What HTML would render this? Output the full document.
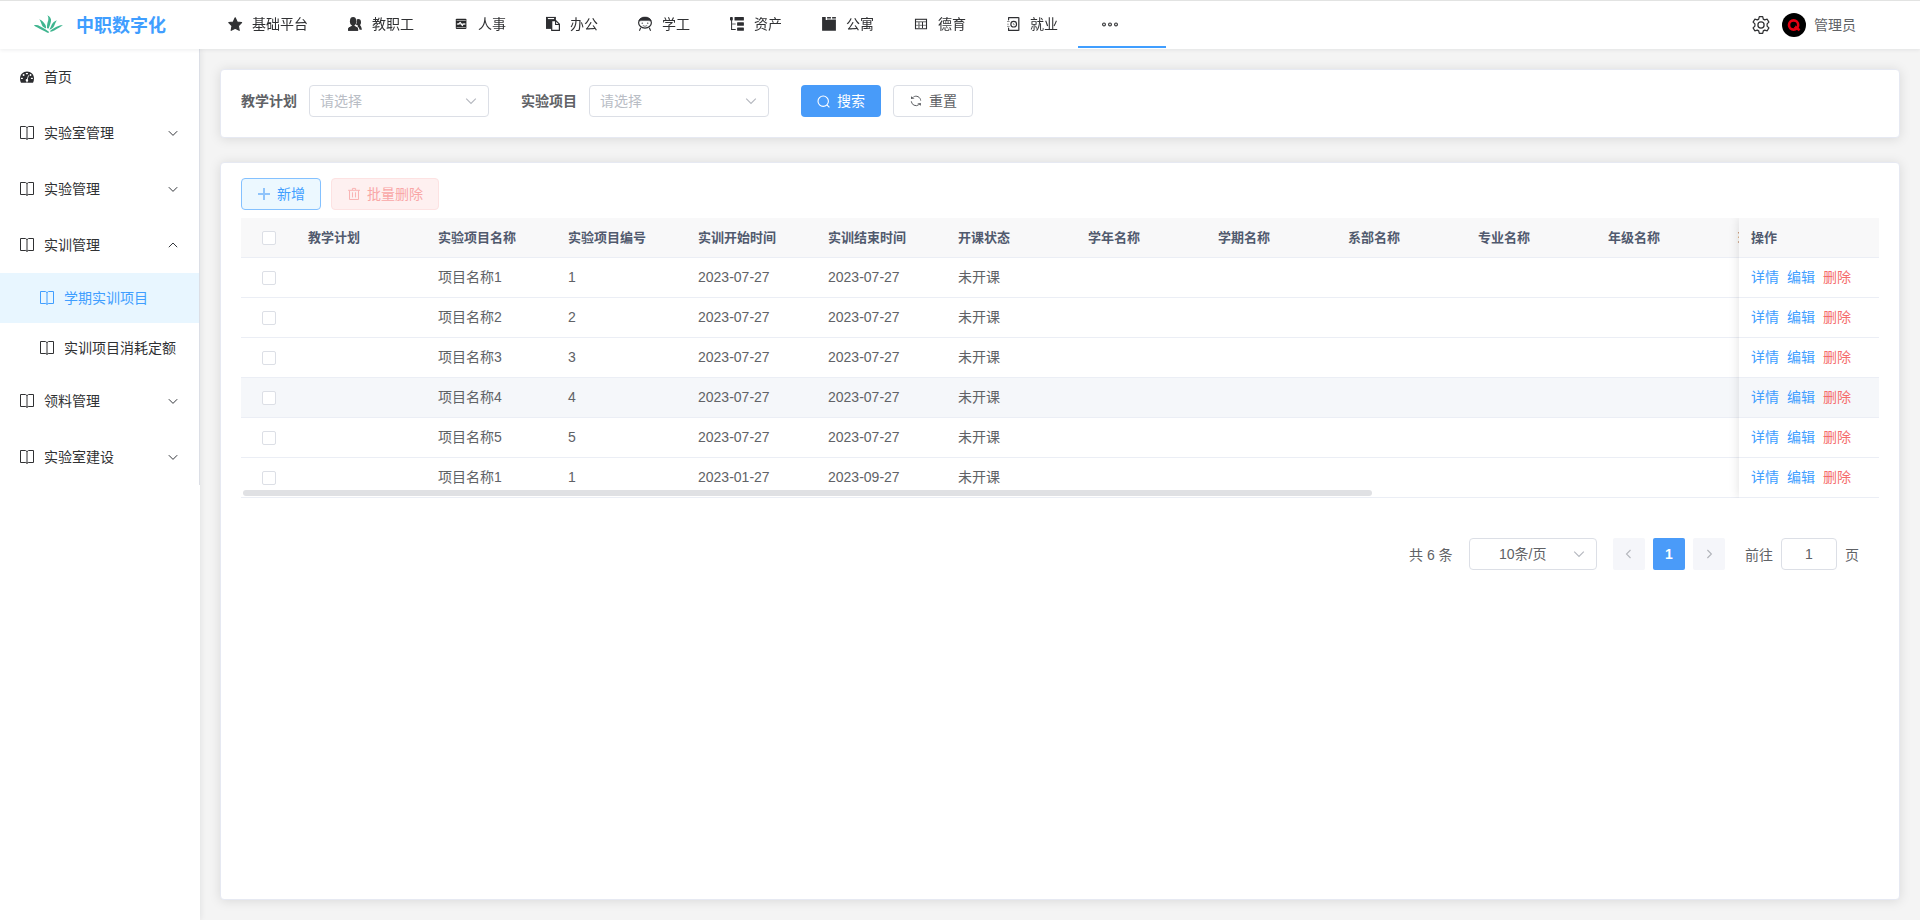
<!DOCTYPE html>
<html lang="zh-CN">
<head>
<meta charset="utf-8">
<title>中职数字化</title>
<style>
*{box-sizing:border-box;margin:0;padding:0}
html,body{width:1920px;height:920px;overflow:hidden}
body{font-family:"Liberation Sans","Noto Sans CJK SC",sans-serif;font-size:14px;color:#606266;background:#f4f4f4;position:relative}
.abs{position:absolute}
/* header */
#hdr{position:absolute;left:0;top:0;width:1920px;height:49px;background:#fff;box-shadow:0 1px 4px rgba(0,21,41,.08);z-index:10}
#topl{position:absolute;left:0;top:0;width:1920px;height:1px;background:#e2e3e2}
#title{position:absolute;left:76px;top:2px;height:48px;line-height:48px;font-size:18px;font-weight:bold;color:#409eff;white-space:nowrap}
.nav{position:absolute;top:0;height:48px;line-height:48px;font-size:14px;color:#303133;white-space:nowrap}
.nav svg{position:absolute}
.nav span{will-change:transform}
#uline{position:absolute;left:1078px;top:46px;width:88px;height:2px;background:#409eff}
/* sidebar */
#side{position:absolute;left:0;top:49px;width:200px;height:871px;background:#fff;box-shadow:1px 0 6px rgba(0,21,41,.08);z-index:5}
#sideb{position:absolute;left:199px;top:0;width:1px;height:436px;background:#dcdfe6}
.mi{position:absolute;left:0;width:199px;height:56px;line-height:56px;font-size:14px;color:#303133;white-space:nowrap}
.mi .t{position:absolute;left:44px;top:0}
.mi svg.ic{position:absolute;left:20px;top:21px}
.mi svg.ar{position:absolute;left:167px;top:22px}
.si{position:absolute;left:0;width:199px;height:50px;line-height:50px;font-size:14px;color:#303133;white-space:nowrap}
.si .t{position:absolute;left:64px;top:0}
.si svg.ic{position:absolute;left:40px;top:18px}
/* cards */
.card{position:absolute;left:220px;width:1680px;background:#fff;border:1px solid #e6e9f2;border-radius:4px;box-shadow:0 1px 12px rgba(0,0,0,.115)}
.lbl{position:absolute;font-weight:bold;color:#606266;font-size:14px;line-height:32px;white-space:nowrap}
.sel{position:absolute;height:32px;border:1px solid #dcdfe6;border-radius:4px;background:#fff;font-size:14px;line-height:30px;color:#b9bdc5;padding-left:10px}
.btn{position:absolute;height:32px;border-radius:4px;font-size:14px;line-height:30px;white-space:nowrap;border:1px solid transparent}
/* table */
#tbl{position:absolute;left:241px;top:218px;width:1638px;height:280px;overflow:hidden}
.tr{position:absolute;left:0;width:1638px;height:40px;border-bottom:1px solid #ebeef5;background:#fff}
.tr.h{background:#f8f8f9;color:#515a6e;font-weight:bold}
.tr.hv{background:#f5f7fa}
.td{position:absolute;top:0;height:39px;line-height:39px;font-size:14px;white-space:nowrap}
.cb{position:absolute;left:21px;top:13px;width:14px;height:14px;border:1px solid #dcdfe6;border-radius:2px;background:#fff}
#fix{position:absolute;left:1498px;top:0;width:140px;height:280px;box-shadow:0 0 10px rgba(0,0,0,.12);background:#fff}
.op{position:absolute;left:0;width:140px;height:40px;border-bottom:1px solid #ebeef5;line-height:39px;font-size:14px;white-space:nowrap}
.op span{position:absolute;top:0}
.b{color:#409eff}.r{color:#f56c6c}
</style>
</head>
<body>
<div id="hdr">
  <div id="topl"></div>
  <svg class="abs" style="left:28px;top:10px" width="40" height="28" viewBox="28 10 40 28">
    <g fill="#3fb58f">
      <path d="M47.2 15.3 C50 16.5 51.5 19 51 21 C50.5 24 49.5 26 48.7 28.6 L47 28.3 C46.8 25 47.5 22.5 48.2 20.5 C48.6 18.5 48.4 16.5 47.2 15.3 Z"/>
      <path d="M39.3 19.3 C42 20.5 44.5 23 45.5 25 C46 26.5 46.2 27.5 46 28.4 C44 27.5 42.5 26.5 42 25.2 C41 23 40.5 21 39.3 19.3 Z"/>
      <path d="M56.8 20.2 C54 21.5 52.5 23 51.8 24.5 C51 26.5 50.3 28.3 49.3 29.8 C51 29.2 53 27.8 54 26.2 C55 24 55.8 22 56.8 20.2 Z"/>
      <path d="M33.9 25.4 C36 24.6 38 25 40 26.2 C43 27.8 46.5 29.8 48.5 31.5 C49.2 32 49.3 32.5 48.6 32.8 L47.4 32.7 C44 31 40 29 37.5 27.6 C36 26.8 34.8 26.2 33.9 25.4 Z"/>
      <path d="M62.9 25.2 C60.5 25 58.5 25.6 56.5 26.8 C54 28.2 51.8 29.6 50.3 30.8 C49.9 31.3 50.1 31.7 50.8 31.8 C53 31.6 55.5 30 57.5 28.6 C59.5 27.2 61.5 26.2 62.9 25.2 Z"/>
    </g>
  </svg>
  <div id="title">中职数字化</div>
  <div class="nav" style="left:0"><svg style="left:227.7px;top:17px" width="15" height="14.4" viewBox="0 0 15 14" preserveAspectRatio="none"><path fill="#303133" d="M7.2 0.8 L9.2 4.9 L13.6 5.5 L10.4 8.6 L11.2 13 L7.2 10.9 L3.2 13 L4 8.6 L0.8 5.5 L5.2 4.9 Z" stroke="#303133" stroke-width="1.1" stroke-linejoin="round"/></svg><span class="abs" style="left:252px;top:0">基础平台</span></div>
  <div class="nav" style="left:0"><svg style="left:340px;top:10px" width="30" height="28" viewBox="340 10 30 28"><g fill="#303133"><ellipse cx="358.3" cy="22.2" rx="2.7" ry="3.2"/><path d="M358.2 24.6 L359.8 24.8 C360.4 25.8 361.7 27 361.9 29.8 L359.6 29.8 C359.4 28.4 358.8 27.2 357.6 26.4 Z"/><g stroke="#fff" stroke-width="1" paint-order="stroke"><path d="M348.1 30.7 L348.1 29 C348.3 27.5 350 26.6 351.6 26.2 L352.2 25 L354.2 25 L354.8 26.2 C356.4 26.6 358 27.5 358.1 29 L358.1 30.7 Z"/><ellipse cx="353.1" cy="21.3" rx="3.2" ry="4.3"/></g><path d="M348.1 30.7 L348.1 29 C348.3 27.5 350 26.6 351.6 26.2 L352.2 25 L354.2 25 L354.8 26.2 C356.4 26.6 358 27.5 358.1 29 L358.1 30.7 Z"/></g></svg><span class="abs" style="left:372px;top:0">教职工</span></div>
  <div class="nav" style="left:0"><svg style="left:448px;top:10px" width="30" height="28" viewBox="448 10 30 28"><rect x="455.8" y="18.7" width="10.6" height="10.3" rx="0.9" fill="#28292b"/><rect x="456.6" y="20.2" width="9.2" height="0.8" fill="#b8b8b8"/><rect x="456.6" y="27.1" width="9.2" height="0.8" fill="#b8b8b8"/><rect x="456.8" y="23.5" width="8.8" height="1.1" fill="#a8a8a8"/><path d="M457.2 24 H458.6 L460.2 22.3 L462.4 25.6 L463.2 24 H465.2" stroke="#fff" stroke-width="1.1" fill="none" stroke-linejoin="round"/></svg><span class="abs" style="left:478px;top:0">人事</span></div>
  <div class="nav" style="left:0"><svg style="left:538px;top:10px" width="30" height="28" viewBox="538 10 30 28"><rect x="546" y="16.9" width="9.9" height="12" fill="#2e2f32"/><rect x="547.9" y="18" width="6.2" height="1.1" fill="#fff"/><path d="M551.7 20.6 H555.8 L559.4 24.2 V30.4 H551.7 Z" fill="#fff" stroke="#2a2b2e" stroke-width="1.2" stroke-linejoin="round"/><path d="M555.6 20.6 V24.5 H559.4" fill="none" stroke="#2a2b2e" stroke-width="1.1"/></svg><span class="abs" style="left:570px;top:0">办公</span></div>
  <div class="nav" style="left:0"><svg style="left:630px;top:10px" width="30" height="28" viewBox="630 10 30 28"><ellipse cx="645" cy="22.8" rx="6.4" ry="5.3" fill="#fff" stroke="#2c2d30" stroke-width="1.2"/><path d="M638.9 21 C639.6 18.2 642 17 645 17 C648 17 650.4 18.2 651.1 21 C649 20.5 647 20.5 645 20.6 C643 20.5 641 20.5 638.9 21 Z" fill="#2c2d30" stroke="#2c2d30" stroke-width="0.5"/><ellipse cx="642.3" cy="23.2" rx="0.8" ry="0.6" fill="#55575a"/><ellipse cx="647.7" cy="23.2" rx="0.8" ry="0.6" fill="#55575a"/><path d="M642.8 25.5 Q645 27.2 647.2 25.5" stroke="#66686b" stroke-width="0.9" fill="none"/><path d="M640.7 27.8 L639.4 30.7 M649.3 27.8 L650.6 30.7" stroke="#2c2d30" stroke-width="1.1" fill="none"/></svg><span class="abs" style="left:662px;top:0">学工</span></div>
  <div class="nav" style="left:0"><svg style="left:722px;top:10px" width="30" height="28" viewBox="722 10 30 28"><g fill="#2c2d30"><rect x="730" y="17.1" width="2.8" height="3.4" rx="0.7"/><rect x="731.1" y="20" width="1" height="9.9"/><rect x="731.1" y="28.9" width="4.7" height="1" rx="0.3"/><rect x="732" y="23.4" width="3.7" height="1.2" fill="#7d7e80"/><rect x="734.5" y="17.1" width="9.4" height="3.4" rx="0.5"/><rect x="737.1" y="22.2" width="6.8" height="3.5" rx="0.5"/><rect x="737.1" y="27.4" width="6.8" height="3.4" rx="0.5"/></g></svg><span class="abs" style="left:754px;top:0">资产</span></div>
  <div class="nav" style="left:0"><svg style="left:814px;top:10px" width="30" height="28" viewBox="814 10 30 28"><path d="M822.1 17.1 H825.7 V19.9 H835.9 V30.8 H822.1 Z" fill="#2e2f32"/><rect x="827.1" y="18" width="3.8" height="2" fill="#9b9c9e"/><rect x="832.1" y="18" width="3.8" height="2" fill="#9b9c9e"/><rect x="830.9" y="19.3" width="1.2" height="0.7" fill="#9b9c9e"/><rect x="827.1" y="17.1" width="3.8" height="1" fill="#222326"/><rect x="832.1" y="17.1" width="3.8" height="1" fill="#222326"/></svg><span class="abs" style="left:846px;top:0">公寓</span></div>
  <div class="nav" style="left:0"><svg style="left:906px;top:10px" width="30" height="28" viewBox="906 10 30 28"><rect x="915.5" y="19.3" width="11" height="9.4" fill="#fff" stroke="#2e2f32" stroke-width="1.1"/><rect x="916" y="21.3" width="10" height="1" fill="#606163"/><rect x="916" y="24.8" width="10" height="1.1" fill="#8a8b8d"/><rect x="918.3" y="22" width="1.3" height="6.4" fill="#77787a"/><rect x="922" y="22" width="1" height="6.4" fill="#2e2f32"/><rect x="916" y="28" width="10" height="0.7" fill="#6a6b6d"/></svg><span class="abs" style="left:938px;top:0">德育</span></div>
  <div class="nav" style="left:0"><svg style="left:998px;top:10px" width="30" height="28" viewBox="998 10 30 28"><path d="M1008.6 19.8 V17.6 H1018.7 V30.4 H1008.6 V28" fill="none" stroke="#2e2f32" stroke-width="1.15" stroke-linejoin="round" stroke-linecap="round"/><rect x="1018.1" y="17.6" width="1.2" height="12.8" fill="#5a5b5e"/><circle cx="1013.7" cy="24.15" r="2.85" fill="#fff" stroke="#2e2f32" stroke-width="1.15"/><path d="M1013.4 23 V24.7 H1014.8" stroke="#8a8b8d" stroke-width="0.9" fill="none"/><path d="M1007 21.5 H1009.7 M1007.2 24.2 H1008.8 M1007 26.4 H1009.7" stroke="#77787a" stroke-width="0.8"/></svg><span class="abs" style="left:1030px;top:0">就业</span></div>
  <svg class="abs" style="left:1101px;top:20px" width="18" height="8" viewBox="0 0 18 8"><g fill="#e8e8e8" stroke="#303133" stroke-width="1.05"><circle cx="3" cy="4.4" r="1.45"/><circle cx="9" cy="4.4" r="1.45"/><circle cx="15" cy="4.4" r="1.45"/></g></svg>
  <div id="uline"></div>
  <svg class="abs" style="left:1751px;top:15px" width="20" height="20" viewBox="0 0 20 20"><g fill="none" stroke="#303133" stroke-width="1.25" stroke-linejoin="round"><path d="M8.3 1.6 H11.7 L12.3 4.1 L13.7 4.9 L16.2 4.2 L17.9 7.1 L16.1 8.9 V11.1 L17.9 12.9 L16.2 15.8 L13.7 15.1 L12.3 15.9 L11.7 18.4 H8.3 L7.7 15.9 L6.3 15.1 L3.8 15.8 L2.1 12.9 L3.9 11.1 V8.9 L2.1 7.1 L3.8 4.2 L6.3 4.9 L7.7 4.1 Z"/><circle cx="10" cy="10" r="3.1"/></g></svg>
  <div class="abs" style="left:1782px;top:13px;width:24px;height:24px;border-radius:12px;background:#000"></div>
  <svg class="abs" style="left:1782px;top:13px" width="24" height="24" viewBox="0 0 24 24"><circle cx="11.6" cy="12" r="4.6" fill="none" stroke="#e60012" stroke-width="2.6"/><path d="M12.6 13.4 L17.6 17.2" stroke="#e60012" stroke-width="2.6"/><path d="M9.4 11 Q12 9.4 13.6 11.6 L13 14 L10.4 13.6 Z" fill="#000"/></svg>
  <div class="abs" style="left:1814px;top:0;height:48px;line-height:50px;font-size:14px;color:#606266;white-space:nowrap">管理员</div>
</div>
<div id="side"><div id="sideb"></div>
<div class="mi" style="top:0"><svg class="abs" style="left:12px;top:14px" width="30" height="28" viewBox="12 63 30 28"><path d="M21 82.8 C20.3 81.6 20 80.2 20 78.6 C20 74.4 23 71.4 27 71.4 C31 71.4 34 74.4 34 78.6 C34 80.2 33.7 81.6 33 82.8 Z" fill="#2c2d30"/><g fill="#fff"><rect x="25.8" y="72.9" width="2.2" height="1.3" rx="0.4"/><ellipse cx="23.6" cy="75" rx="0.95" ry="1"/><ellipse cx="30.5" cy="75" rx="0.95" ry="1"/><rect x="20.9" y="77.8" width="2" height="1.3" rx="0.4"/><rect x="30.9" y="77.8" width="2" height="1.3" rx="0.4"/><path d="M28.1 75.2 L28.9 75.5 L27.7 79.2 C28.4 79.8 28.4 80.9 27.6 81.4 L27.2 82.6 L26.6 82.6 L26.5 81.5 C25.6 81.1 25.4 80 26.1 79.3 C26.4 79 26.7 78.9 27 78.9 Z"/></g></svg><span class="t">首页</span></div>
<div class="mi" style="top:56px"><svg class="ic" width="14" height="14" viewBox="0 0 14 14"><path d="M0.5 0.5 H5.6 L7 1.7 L8.4 0.5 H13.5 V12.5 H8.2 L7 13.4 L5.8 12.5 H0.5 Z M7 1.7 V13.4" fill="none" stroke="#303133" stroke-width="1" stroke-linejoin="miter"/></svg><span class="t">实验室管理</span><svg class="ar" width="12" height="12" viewBox="0 0 12 12"><path d="M1.8 4.2 L6 8.4 L10.2 4.2" fill="none" stroke="#33363b" stroke-width="1"/></svg></div>
<div class="mi" style="top:112px"><svg class="ic" width="14" height="14" viewBox="0 0 14 14"><path d="M0.5 0.5 H5.6 L7 1.7 L8.4 0.5 H13.5 V12.5 H8.2 L7 13.4 L5.8 12.5 H0.5 Z M7 1.7 V13.4" fill="none" stroke="#303133" stroke-width="1" stroke-linejoin="miter"/></svg><span class="t">实验管理</span><svg class="ar" width="12" height="12" viewBox="0 0 12 12"><path d="M1.8 4.2 L6 8.4 L10.2 4.2" fill="none" stroke="#33363b" stroke-width="1"/></svg></div>
<div class="mi" style="top:168px"><svg class="ic" width="14" height="14" viewBox="0 0 14 14"><path d="M0.5 0.5 H5.6 L7 1.7 L8.4 0.5 H13.5 V12.5 H8.2 L7 13.4 L5.8 12.5 H0.5 Z M7 1.7 V13.4" fill="none" stroke="#303133" stroke-width="1" stroke-linejoin="miter"/></svg><span class="t">实训管理</span><svg class="ar" width="12" height="12" viewBox="0 0 12 12"><path d="M1.8 8.2 L6 4 L10.2 8.2" fill="none" stroke="#33363b" stroke-width="1"/></svg></div>
<div class="si" style="top:224px;background:#e8f6ff;color:#409eff"><svg class="ic" width="14" height="14" viewBox="0 0 14 14"><path d="M0.5 0.5 H5.6 L7 1.7 L8.4 0.5 H13.5 V12.5 H8.2 L7 13.4 L5.8 12.5 H0.5 Z M7 1.7 V13.4" fill="none" stroke="#409eff" stroke-width="1" stroke-linejoin="miter"/></svg><span class="t">学期实训项目</span></div>
<div class="si" style="top:274px"><svg class="ic" width="14" height="14" viewBox="0 0 14 14"><path d="M0.5 0.5 H5.6 L7 1.7 L8.4 0.5 H13.5 V12.5 H8.2 L7 13.4 L5.8 12.5 H0.5 Z M7 1.7 V13.4" fill="none" stroke="#303133" stroke-width="1" stroke-linejoin="miter"/></svg><span class="t">实训项目消耗定额</span></div>
<div class="mi" style="top:324px"><svg class="ic" width="14" height="14" viewBox="0 0 14 14"><path d="M0.5 0.5 H5.6 L7 1.7 L8.4 0.5 H13.5 V12.5 H8.2 L7 13.4 L5.8 12.5 H0.5 Z M7 1.7 V13.4" fill="none" stroke="#303133" stroke-width="1" stroke-linejoin="miter"/></svg><span class="t">领料管理</span><svg class="ar" width="12" height="12" viewBox="0 0 12 12"><path d="M1.8 4.2 L6 8.4 L10.2 4.2" fill="none" stroke="#33363b" stroke-width="1"/></svg></div>
<div class="mi" style="top:380px"><svg class="ic" width="14" height="14" viewBox="0 0 14 14"><path d="M0.5 0.5 H5.6 L7 1.7 L8.4 0.5 H13.5 V12.5 H8.2 L7 13.4 L5.8 12.5 H0.5 Z M7 1.7 V13.4" fill="none" stroke="#303133" stroke-width="1" stroke-linejoin="miter"/></svg><span class="t">实验室建设</span><svg class="ar" width="12" height="12" viewBox="0 0 12 12"><path d="M1.8 4.2 L6 8.4 L10.2 4.2" fill="none" stroke="#33363b" stroke-width="1"/></svg></div>
</div>
<div class="card" id="c1" style="top:69px;height:69px"></div>
<div class="lbl" style="left:241px;top:85px">教学计划</div>
<div class="sel" style="left:309px;top:85px;width:180px">请选择</div>
<svg class="abs" style="left:465px;top:95px" width="12" height="12" viewBox="0 0 12 12"><path d="M1.2 3.6 L6 8.4 L10.8 3.6" fill="none" stroke="#b4b7be" stroke-width="1.1"/></svg>
<div class="lbl" style="left:521px;top:85px">实验项目</div>
<div class="sel" style="left:589px;top:85px;width:180px">请选择</div>
<svg class="abs" style="left:745px;top:95px" width="12" height="12" viewBox="0 0 12 12"><path d="M1.2 3.6 L6 8.4 L10.8 3.6" fill="none" stroke="#b4b7be" stroke-width="1.1"/></svg>
<div class="btn" style="left:801px;top:85px;width:80px;background:#489bf9;color:#fff"><svg class="abs" style="left:14.1px;top:7.9px" width="16" height="16" viewBox="0 0 16 16"><circle cx="7.2" cy="7.2" r="5.2" fill="none" stroke="#fff" stroke-width="1.1"/><path d="M10.9 10.9 L13.4 13.4" stroke="#fff" stroke-width="1.1"/></svg><span class="abs" style="left:35px;top:0">搜索</span></div>
<div class="btn" style="left:893px;top:85px;width:80px;background:#fff;border-color:#dcdfe6;color:#606266"><svg class="abs" style="left:8px;top:3px" width="30" height="24" viewBox="902 89 30 24"><g fill="none" stroke="#5c5e62" stroke-width="1"><path d="M913.4 97 A4.7 4.7 0 0 1 920.7 100.6"/><path d="M911.3 101.3 A4.7 4.7 0 0 0 918.8 104.7"/></g><g fill="#5c5e62"><path d="M911 96.2 V98.9 L914.6 98.5 Z"/><path d="M920.9 105.7 V103.1 L917.3 103.5 Z"/></g></svg><span class="abs" style="left:35px;top:0">重置</span></div>
<div class="card" id="c2" style="top:162px;height:738px"></div>
<div class="btn" style="left:241px;top:178px;width:80px;background:#ecf8ff;border-color:#84c1ff;color:#409eff"><svg class="abs" style="left:16px;top:9px" width="12" height="12" viewBox="0 0 12 12"><path d="M6 0 V12 M0 6 H12" stroke="#8fc4fb" stroke-width="2" fill="none"/></svg><span class="abs" style="left:35px;top:0">新增</span></div>
<div class="btn" style="left:331px;top:178px;width:108px;background:#fef0f0;border-color:#fde2e2;color:#f9a7a7"><svg class="abs" style="left:8px;top:3px" width="30" height="24" viewBox="340 182 30 24"><path d="M348.1 190.3 H360 M352.4 190 V188.4 H355.6 V190 M349.5 190.5 V199.5 H358.5 V190.5 M352.5 192.3 V197.4 M355.5 192.3 V197.4" stroke="#f9b5b5" stroke-width="1" fill="none" stroke-linejoin="round"/></svg><span class="abs" style="left:35px;top:0">批量删除</span></div>
<div id="tbl">
<div class="tr h" style="top:0"><div class="cb"></div><div class="td" style="left:67px;font-size:13px">教学计划</div><div class="td" style="left:197px;font-size:13px">实验项目名称</div><div class="td" style="left:327px;font-size:13px">实验项目编号</div><div class="td" style="left:457px;font-size:13px">实训开始时间</div><div class="td" style="left:587px;font-size:13px">实训结束时间</div><div class="td" style="left:717px;font-size:13px">开课状态</div><div class="td" style="left:847px;font-size:13px">学年名称</div><div class="td" style="left:977px;font-size:13px">学期名称</div><div class="td" style="left:1107px;font-size:13px">系部名称</div><div class="td" style="left:1237px;font-size:13px">专业名称</div><div class="td" style="left:1367px;font-size:13px">年级名称</div><div class="td" style="left:1497px;font-size:13px">班级名称</div></div>
<div class="tr" style="top:40px"><div class="cb"></div><div class="td" style="left:197px">项目名称1</div><div class="td" style="left:327px">1</div><div class="td" style="left:457px">2023-07-27</div><div class="td" style="left:587px">2023-07-27</div><div class="td" style="left:717px">未开课</div></div>
<div class="tr" style="top:80px"><div class="cb"></div><div class="td" style="left:197px">项目名称2</div><div class="td" style="left:327px">2</div><div class="td" style="left:457px">2023-07-27</div><div class="td" style="left:587px">2023-07-27</div><div class="td" style="left:717px">未开课</div></div>
<div class="tr" style="top:120px"><div class="cb"></div><div class="td" style="left:197px">项目名称3</div><div class="td" style="left:327px">3</div><div class="td" style="left:457px">2023-07-27</div><div class="td" style="left:587px">2023-07-27</div><div class="td" style="left:717px">未开课</div></div>
<div class="tr hv" style="top:160px"><div class="cb"></div><div class="td" style="left:197px">项目名称4</div><div class="td" style="left:327px">4</div><div class="td" style="left:457px">2023-07-27</div><div class="td" style="left:587px">2023-07-27</div><div class="td" style="left:717px">未开课</div></div>
<div class="tr" style="top:200px"><div class="cb"></div><div class="td" style="left:197px">项目名称5</div><div class="td" style="left:327px">5</div><div class="td" style="left:457px">2023-07-27</div><div class="td" style="left:587px">2023-07-27</div><div class="td" style="left:717px">未开课</div></div>
<div class="tr" style="top:240px"><div class="cb"></div><div class="td" style="left:197px">项目名称1</div><div class="td" style="left:327px">1</div><div class="td" style="left:457px">2023-01-27</div><div class="td" style="left:587px">2023-09-27</div><div class="td" style="left:717px">未开课</div></div>
<div class="abs" style="left:2px;top:272px;width:1129px;height:6px;border-radius:3px;background:#e0e1e4"></div>
<div id="fix">
<div class="op" style="top:0;background:#f8f8f9;color:#515a6e;font-weight:bold;font-size:13px"><span style="left:12px">操作</span></div>
<div class="op" style="top:40px"><span class="b" style="left:12px">详情</span><span class="b" style="left:48px">编辑</span><span class="r" style="left:84px">删除</span></div>
<div class="op" style="top:80px"><span class="b" style="left:12px">详情</span><span class="b" style="left:48px">编辑</span><span class="r" style="left:84px">删除</span></div>
<div class="op" style="top:120px"><span class="b" style="left:12px">详情</span><span class="b" style="left:48px">编辑</span><span class="r" style="left:84px">删除</span></div>
<div class="op" style="top:160px;background:#f5f7fa"><span class="b" style="left:12px">详情</span><span class="b" style="left:48px">编辑</span><span class="r" style="left:84px">删除</span></div>
<div class="op" style="top:200px"><span class="b" style="left:12px">详情</span><span class="b" style="left:48px">编辑</span><span class="r" style="left:84px">删除</span></div>
<div class="op" style="top:240px"><span class="b" style="left:12px">详情</span><span class="b" style="left:48px">编辑</span><span class="r" style="left:84px">删除</span></div>
</div>
</div>

<div class="abs" style="left:1409px;top:539px;line-height:32px;font-size:14px;color:#606266;white-space:nowrap">共 6 条</div>
<div class="abs" style="left:1469px;top:538px;width:128px;height:32px;border:1px solid #dcdfe6;border-radius:4px;background:#fff;line-height:30px;font-size:14px;color:#606266"><span class="abs" style="left:29px;top:0;white-space:nowrap">10条/页</span></div>
<svg class="abs" style="left:1573px;top:548px" width="12" height="12" viewBox="0 0 12 12"><path d="M1.2 3.6 L6 8.4 L10.8 3.6" fill="none" stroke="#b4b7be" stroke-width="1.1"/></svg>
<div class="abs" style="left:1613px;top:538px;width:32px;height:32px;border-radius:2px;background:#f5f6fa"><svg class="abs" style="left:10px;top:10px" width="12" height="12" viewBox="0 0 12 12"><path d="M7.5 2 L3.5 6 L7.5 10" fill="none" stroke="#b4b7bd" stroke-width="1.1"/></svg></div>
<div class="abs" style="left:1653px;top:538px;width:32px;height:32px;border-radius:2px;background:#4a9bf9;color:#fff;font-weight:bold;font-size:14px;line-height:32px;text-align:center">1</div>
<div class="abs" style="left:1693px;top:538px;width:32px;height:32px;border-radius:2px;background:#f5f6fa"><svg class="abs" style="left:10px;top:10px" width="12" height="12" viewBox="0 0 12 12"><path d="M4.4 2 L8.4 6 L4.4 10" fill="none" stroke="#b0b3b9" stroke-width="1.1"/></svg></div>
<div class="abs" style="left:1745px;top:539px;line-height:32px;font-size:14px;color:#606266;white-space:nowrap">前往</div>
<div class="abs" style="left:1781px;top:538px;width:56px;height:32px;border:1px solid #dcdfe6;border-radius:4px;background:#fff;line-height:30px;font-size:14px;color:#606266;text-align:center">1</div>
<div class="abs" style="left:1845px;top:539px;line-height:32px;font-size:14px;color:#606266;white-space:nowrap">页</div>
</body>
</html>
